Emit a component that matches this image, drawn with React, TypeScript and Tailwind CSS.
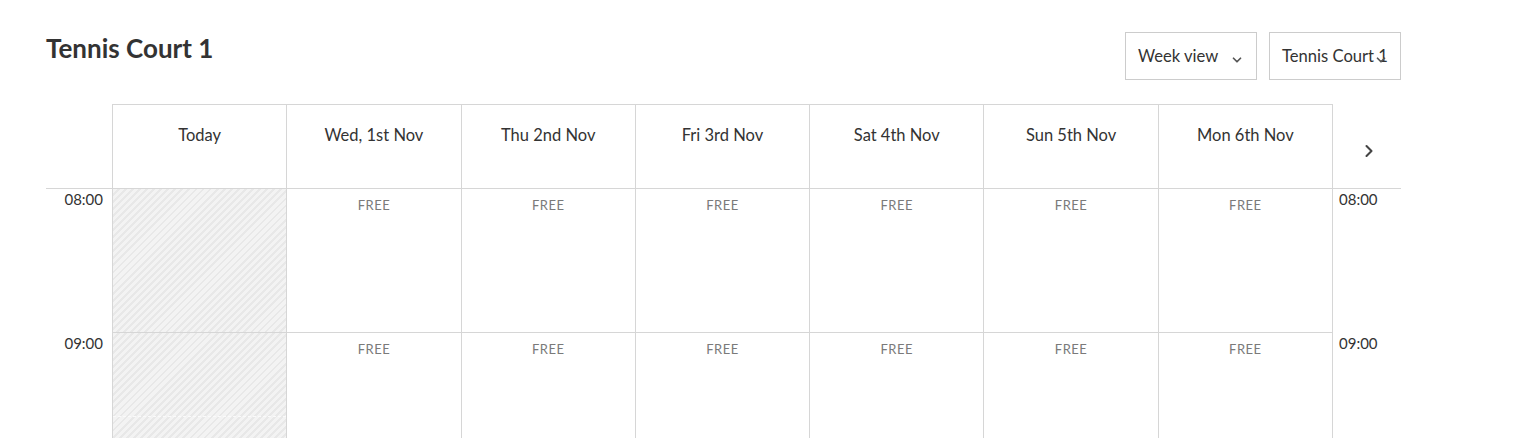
import { ChevronDown, ChevronRight } from 'lucide-react';

const days = ['Today', 'Wed, 1st Nov', 'Thu 2nd Nov', 'Fri 3rd Nov', 'Sat 4th Nov', 'Sun 5th Nov', 'Mon 6th Nov'];
const hours = ['08:00', '09:00'];

function Select({ label }: { label: string }) {
  return (
    <div className="relative w-[132px] h-[48px] border border-[#cccccc] bg-white flex items-center pl-3 overflow-hidden">
      <span className="text-[16.6px] text-[#333] whitespace-nowrap">{label}</span>
      <ChevronDown className="absolute right-[12px] top-[20px] text-[#555]" size={14} strokeWidth={3} />
    </div>
  );
}

export default function App() {
  return (
    <div className="min-h-screen bg-white font-['Lato','Liberation_Sans',sans-serif] text-[#333]">
      {/* Top bar */}
      <div className="flex items-start justify-between pl-[46px] pr-[135px] pt-[32px]">
        <h1 className="text-[26px] leading-[32px] font-bold text-[#333]">Tennis Court 1</h1>
        <div className="flex gap-[12px]">
          <Select label="Week view" />
          <Select label="Tennis Court 1" />
        </div>
      </div>

      {/* Calendar */}
      <div className="ml-[46px] mt-[24px] w-[1355px] grid grid-cols-[66px_repeat(7,1fr)_69px]">
        {/* Header */}
        <div className="h-[85px] border-b border-[#d6d6d6]" />
        {days.map(day => (
          <div
            key={day}
            className="h-[85px] border-t border-l border-b border-[#d6d6d6] pt-[18px] text-center text-[16.5px] leading-6"
          >
            {day}
          </div>
        ))}
        <div className="h-[85px] border-l border-b border-[#d6d6d6] flex items-center justify-center pt-[9px] pl-[4px]">
          <ChevronRight className="text-[#444]" size={20} strokeWidth={2.5} />
        </div>

        {/* Rows */}
        {hours.map((hour, row) => (
          <div key={hour} className="contents">
            <div className="h-[144px] pr-[9px] text-right text-[15px] leading-5">{hour}</div>
            <div className="h-[144px] border-l border-b border-[#d6d6d6] bg-[repeating-linear-gradient(135deg,#f3f3f3_0px,#f3f3f3_3px,#e8e8e8_3px,#e8e8e8_5px)]">
              {row === 1 && <div className="mt-[83px] border-t border-dashed border-[#fafafa]" />}
            </div>
            {days.slice(1).map(day => (
              <div
                key={day}
                className="h-[144px] border-l border-b border-[#d6d6d6] pt-[7px] text-center text-[13px] leading-[18px] tracking-[0.5px] text-[#7a7a7a]"
              >
                FREE
              </div>
            ))}
            <div className="h-[144px] border-l border-[#d6d6d6] pl-[6px] text-[15px] leading-5">{hour}</div>
          </div>
        ))}
      </div>
    </div>
  );
}
